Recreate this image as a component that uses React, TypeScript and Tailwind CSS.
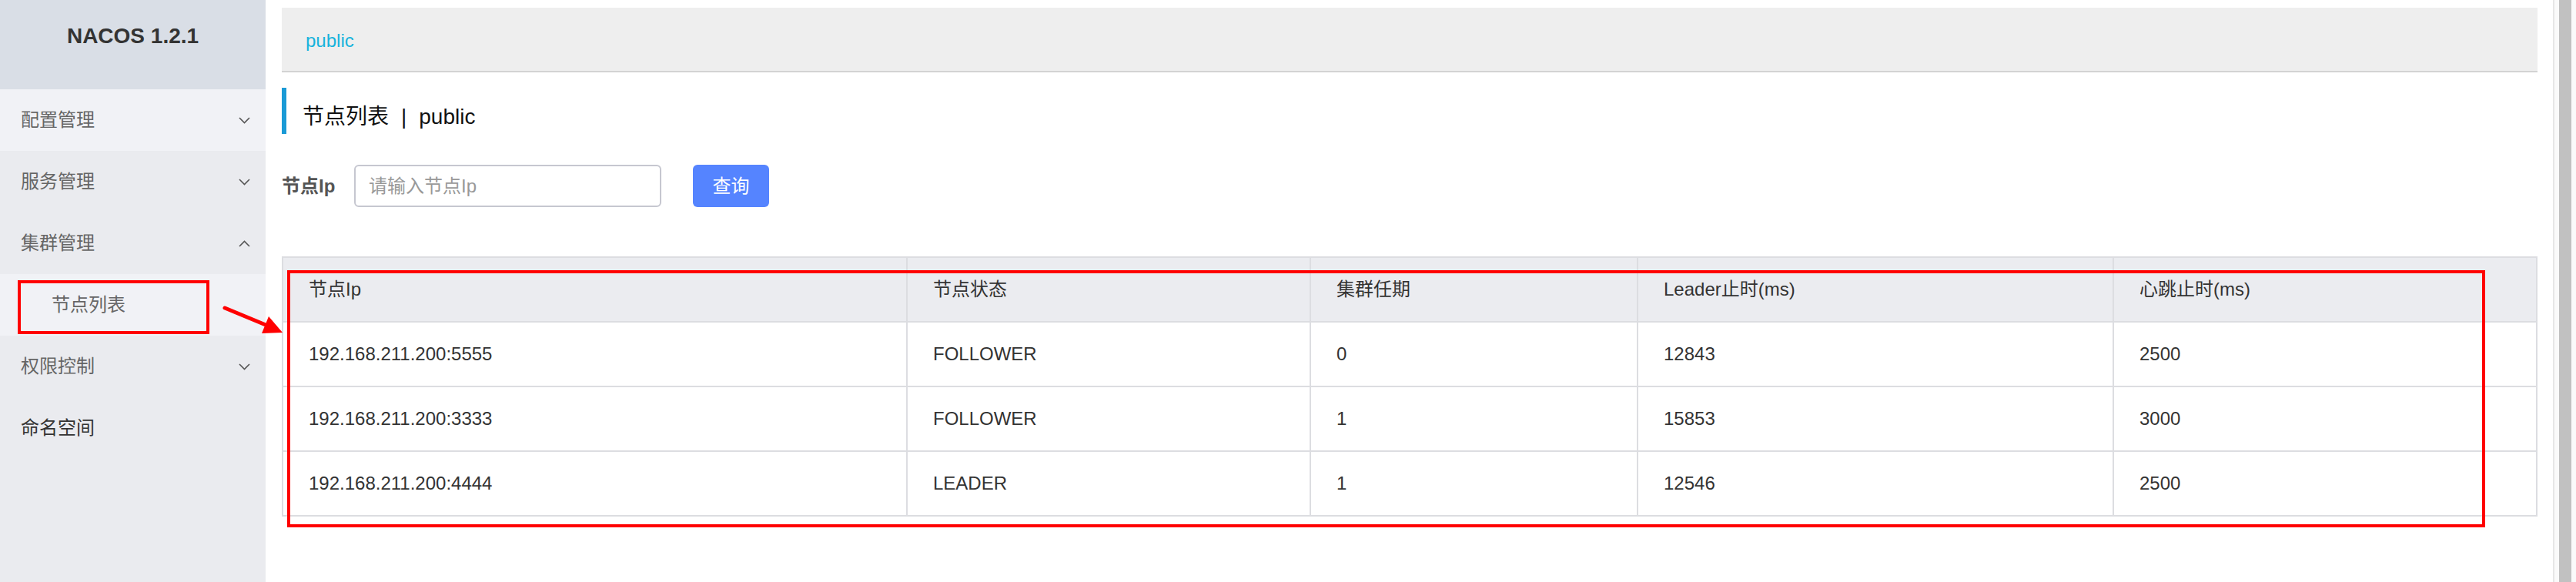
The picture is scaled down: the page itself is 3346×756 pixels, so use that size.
import React from 'react';

const menu = [
  { label: '配置管理', open: false, light: true },
  { label: '服务管理', open: false },
  { label: '集群管理', open: true },
];

const columns = ['节点Ip', '节点状态', '集群任期', 'Leader止时(ms)', '心跳止时(ms)'];

const rows = [
  ['192.168.211.200:5555', 'FOLLOWER', '0', '12843', '2500'],
  ['192.168.211.200:3333', 'FOLLOWER', '1', '15853', '3000'],
  ['192.168.211.200:4444', 'LEADER', '1', '12546', '2500'],
];

const Chevron: React.FC<{ up?: boolean }> = ({ up }) => (
  <svg width="15" height="9" viewBox="0 0 15 9" fill="none" stroke="#555" strokeWidth="1.6">
    {up ? <path d="M1 8L7.5 1.5L14 8" /> : <path d="M1 1L7.5 7.5L14 1" />}
  </svg>
);

const MenuRow: React.FC<{ label: string; open?: boolean; light?: boolean; arrow?: boolean; dark?: boolean }> = ({
  label,
  open,
  light,
  arrow = true,
  dark,
}) => (
  <div
    className={`flex h-[80px] items-center justify-between pl-[27px] pr-[20px] text-[24px] ${
      light ? 'bg-[#f1f2f6]' : ''
    } ${dark ? 'text-[#333]' : 'text-[#666]'}`}
  >
    <span>{label}</span>
    {arrow && <Chevron up={open} />}
  </div>
);

export default function App() {
  return (
    <div className="relative flex h-[756px] w-full overflow-hidden bg-white font-[family-name:'Liberation_Sans','Noto_Sans_CJK_SC',sans-serif]">
      {/* sidebar */}
      <aside className="flex w-[345px] shrink-0 flex-col bg-[#eaebef]">
        <div className="h-[116px] bg-[#d9dee6] pt-[31px] text-center text-[28px] font-bold leading-[32px] text-[#333]">
          NACOS 1.2.1
        </div>
        {menu.map((m) => (
          <MenuRow key={m.label} label={m.label} open={m.open} light={m.light} />
        ))}
        <div className="flex h-[80px] items-center bg-[#f1f2f6] pl-[67px] text-[24px] text-[#666]">节点列表</div>
        <MenuRow label="权限控制" />
        <MenuRow label="命名空间" arrow={false} dark />
      </aside>

      {/* main */}
      <main className="flex min-w-0 flex-1 flex-col pl-[21px] pr-[20px] pt-[10px]">
        <div className="flex h-[84px] items-center border-b-[2px] border-[#d3d3d3] bg-[#eeeeee] pl-[31px] pt-[4px] text-[24px] text-[#17b3dc]">
          public
        </div>

        <div className="mt-[20px] flex h-[60px] border-l-[6px] border-[#1a9ad6] pl-[21px] text-[28px] text-[#111]">
          <div className="flex items-center pt-[16px]">
            <span>节点列表</span>
            <span className="mx-[16px]">|</span>
            <span>public</span>
          </div>
        </div>

        <div className="mt-[40px] flex h-[55px] items-center">
          <span className="w-[94px] text-[24px] font-bold text-[#555]">节点Ip</span>
          <div className="flex h-[55px] w-[399px] items-center rounded-[6px] border-[2px] border-[#c6c7d0] pl-[17px] text-[24px] text-[#999]">
            请输入节点Ip
          </div>
          <button className="ml-[41px] h-[55px] w-[99px] rounded-[6px] bg-[#5584ff] text-[24px] text-white">查询</button>
        </div>

        <div className="mt-[64px] border-[2px] border-b-[2px] border-[#dcdde1]">
          <div className="grid h-[82px] grid-cols-[809px_524px_425px_618px_1fr] bg-[#ebecf0] text-[24px] text-[#333]">
            {columns.map((c, i) => (
              <div key={c} className={`flex items-center pl-[33px] ${i > 0 ? 'border-l-[2px] border-[#dcdde1]' : ''}`}>
                {c}
              </div>
            ))}
          </div>
          {rows.map((r) => (
            <div
              key={r[0]}
              className="grid h-[84px] grid-cols-[809px_524px_425px_618px_1fr] border-t-[2px] border-[#dcdde1] text-[24px] text-[#333]"
            >
              {r.map((v, i) => (
                <div key={i} className={`flex items-center pl-[33px] ${i > 0 ? 'border-l-[2px] border-[#dcdde1]' : ''}`}>
                  {v}
                </div>
              ))}
            </div>
          ))}
        </div>
      </main>

      {/* scrollbar */}
      <div className="w-[30px] shrink-0 border-l-[2px] border-[#e6e6e6] bg-[#fafafa] pl-[6px]">
        <div className="h-full w-[16px] bg-[#c1c1c1]" />
      </div>

      {/* annotations */}
      <div className="pointer-events-none absolute left-[23px] top-[364px] h-[70px] w-[249px] border-[4px] border-[#ff0000]" />
      <div className="pointer-events-none absolute left-[373px] top-[351px] h-[334px] w-[2855px] border-[4px] border-[#ff0000]" />
      <svg className="pointer-events-none absolute left-0 top-0" width="400" height="460" viewBox="0 0 400 460">
        <line x1="292" y1="400" x2="345" y2="422" stroke="#ff0000" strokeWidth="5" strokeLinecap="round" />
        <polygon points="367,432 340,433 349,411" fill="#ff0000" />
      </svg>
    </div>
  );
}
